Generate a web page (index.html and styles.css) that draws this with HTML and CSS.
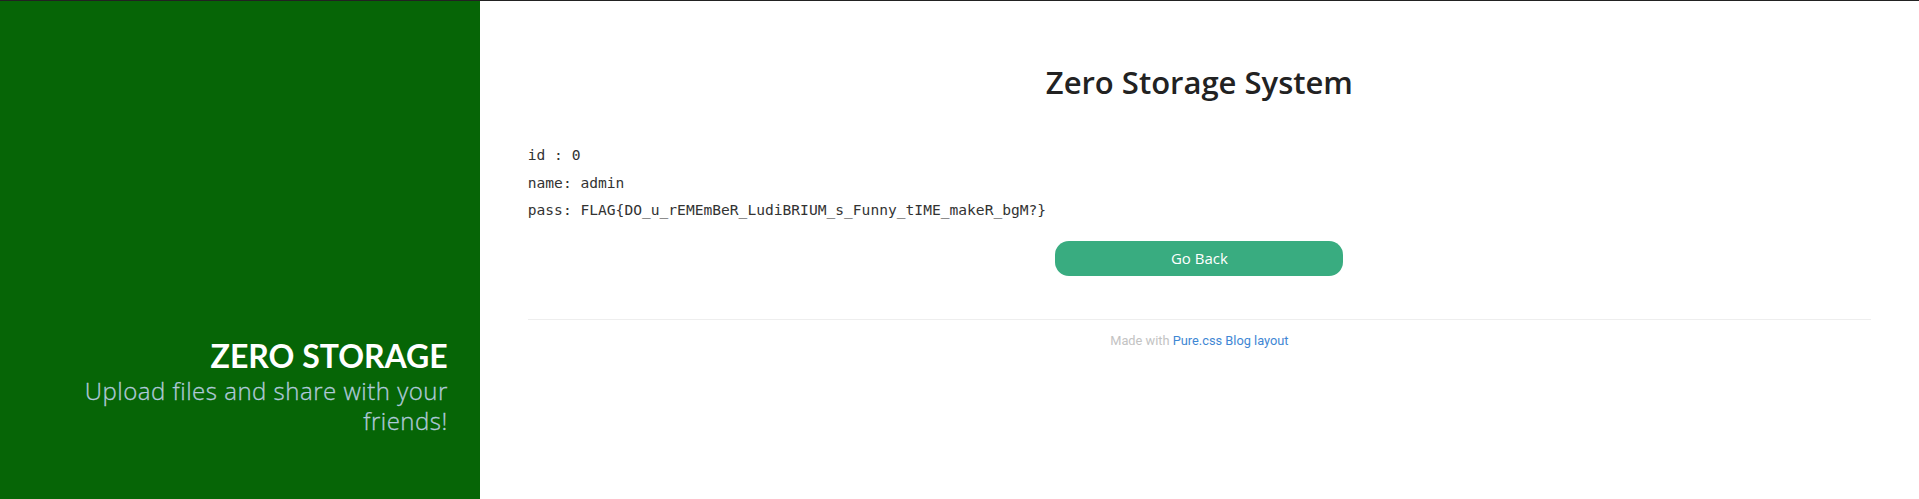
FILE: index.html
```html
<!DOCTYPE html>
<html lang="en">
<head>
<meta charset="utf-8">
<title>Zero Storage System</title>
<link rel="stylesheet" href="styles.css">
</head>
<body>
<div class="layout">
  <aside class="sidebar">
    <div class="header">
      <h1 class="brand-title">ZERO STORAGE</h1>
      <h2 class="brand-tagline">Upload files and share with your friends!</h2>
    </div>
  </aside>
  <main class="content">
    <h1 class="page-title">Zero Storage System</h1>
    <div class="record">
      <p class="record-line">id : 0</p>
      <p class="record-line">name: admin</p>
      <p class="record-line">pass: FLAG{DO_u_rEMEmBeR_LudiBRIUM_s_Funny_tIME_makeR_bgM?}</p>
    </div>
    <div class="actions">
      <a class="btn" href="#">Go Back</a>
    </div>
    <footer class="footer">
      <span class="made">Made with</span> <a class="footer-link" href="#">Pure.css Blog layout</a>
    </footer>
  </main>
</div>
</body>
</html>
```
FILE: styles.css
```css
html, body {
  margin: 0;
  padding: 0;
  background: #fff;
}
body {
  border-top: 1px solid #222;
  font-family: "Open Sans", "Noto Sans", sans-serif;
  color: #222;
}
.layout {
  display: flex;
  min-height: 498px;
}
.sidebar {
  width: 25%;
  flex: none;
  background: #066506;
  display: flex;
  flex-direction: column;
}
.header {
  padding: 335px 32px 0;
  text-align: right;
}
.brand-title {
  margin: 0;
  font-family: Lato, sans-serif;
  font-size: 32px;
  line-height: 40px;
  font-weight: 700;
  color: #fff;
}
.brand-tagline {
  margin: 0;
  font-family: "Open Sans", sans-serif;
  font-size: 24px;
  line-height: 30px;
  font-weight: 300;
  letter-spacing: 0.5px;
  color: rgb(176, 202, 219);
  -webkit-text-stroke: 0.3px rgb(176, 202, 219);
}
.content {
  flex: 1;
  padding: 0 48px;
}
.page-title {
  margin: 61px 0 0;
  text-align: center;
  font-family: "Open Sans", sans-serif;
  font-size: 31px;
  line-height: 40px;
  font-weight: 600;
  color: #222;
}
.record {
  margin-top: 39px;
}
.record-line {
  margin: 0;
  font-family: "DejaVu Sans Mono", "Liberation Mono", monospace;
  font-size: 14.6px;
  line-height: 27.5px;
  color: #333;
}
.actions {
  display: flex;
  justify-content: center;
  margin-top: 17px;
}
.btn {
  width: 288px;
  height: 35px;
  border-radius: 14px;
  background: #39ac80;
  color: #fff;
  text-decoration: none;
  font-size: 15px;
  display: flex;
  align-items: center;
  justify-content: center;
}
.footer {
  margin-top: 43px;
  border-top: 1px solid #eee;
  text-align: center;
  padding-top: 13px;
  font-family: Roboto, sans-serif;
  font-size: 12.8px;
}
.made {
  color: #c3c3c3;
}
.footer-link {
  color: #3f87d4;
  text-decoration: none;
}
```
